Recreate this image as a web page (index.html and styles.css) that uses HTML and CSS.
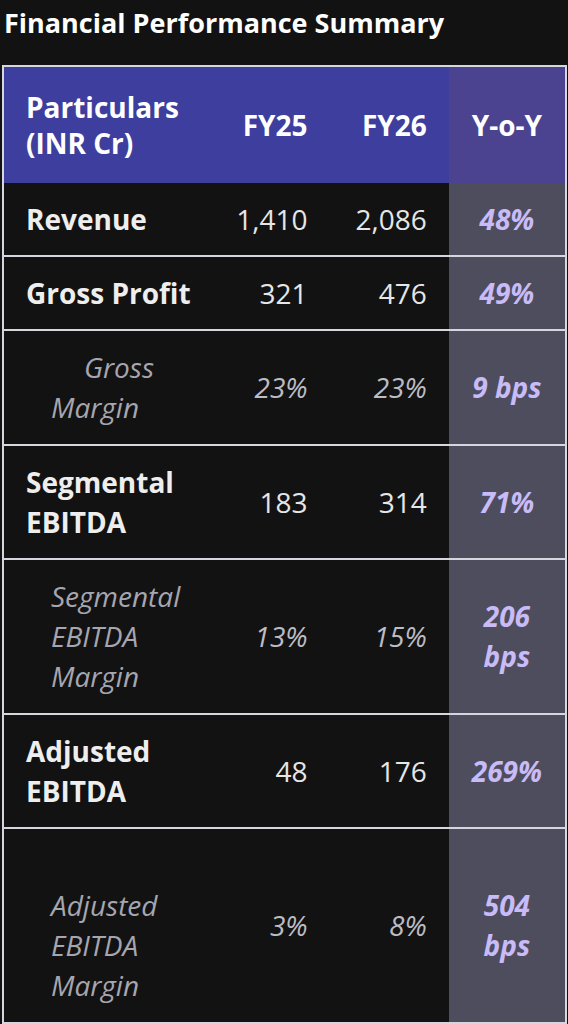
FILE: index.html
```html
<!DOCTYPE html>
<html>
<head>
    <meta charset="utf-8">
    <title>Financial Performance Summary</title>
    <link rel="stylesheet" href="styles.css">
</head>
<body>
    <h1 class="Title">Financial Performance Summary</h1>

    <table class="Summary">
        <colgroup>
            <col class="ColLabel">
            <col class="ColNum">
            <col class="ColNum">
            <col class="ColYoy">
        </colgroup>
        <thead>
            <tr class="Heading">
                <th class="Label">Particulars<br>(INR Cr)</th>
                <th class="Num">FY25</th>
                <th class="Num">FY26</th>
                <th class="Yoy">Y-o-Y</th>
            </tr>
        </thead>
        <tbody>
            <tr>
                <td class="Label">Revenue</td>
                <td class="Num">1,410</td>
                <td class="Num">2,086</td>
                <td class="Yoy">48%</td>
            </tr>
            <tr>
                <td class="Label">Gross Profit</td>
                <td class="Num">321</td>
                <td class="Num">476</td>
                <td class="Yoy">49%</td>
            </tr>
            <tr class="Sub">
                <td class="Label Indent">Gross<br>Margin</td>
                <td class="Num">23%</td>
                <td class="Num">23%</td>
                <td class="Yoy">9 bps</td>
            </tr>
            <tr>
                <td class="Label">Segmental<br>EBITDA</td>
                <td class="Num">183</td>
                <td class="Num">314</td>
                <td class="Yoy">71%</td>
            </tr>
            <tr class="Sub">
                <td class="Label">Segmental<br>EBITDA<br>Margin</td>
                <td class="Num">13%</td>
                <td class="Num">15%</td>
                <td class="Yoy">206<br>bps</td>
            </tr>
            <tr>
                <td class="Label">Adjusted<br>EBITDA</td>
                <td class="Num">48</td>
                <td class="Num">176</td>
                <td class="Yoy">269%</td>
            </tr>
            <tr class="Sub">
                <td class="Label"><br>Adjusted<br>EBITDA<br>Margin</td>
                <td class="Num">3%</td>
                <td class="Num">8%</td>
                <td class="Yoy">504<br>bps</td>
            </tr>
        </tbody>
    </table>
</body>
</html>
```

FILE: styles.css
```css
body {
    margin: 0;
    background-color: #121212;
    font-family: "Open Sans", "Noto Sans", sans-serif;
    color: #ececec;
}

.Title {
    margin: 3px 0 22px 4px;
    font-size: 27px;
    line-height: 40px;
    font-weight: bold;
    color: #ffffff;
}

.Summary {
    margin-left: 2px;
    width: 565px;
    table-layout: fixed;
    border-collapse: collapse;
    border: 2px solid #d6d6de;
    font-size: 28px;
    line-height: 40px;
}

.ColLabel {
    width: 207px;
}

.ColNum {
    width: 119px;
}

.ColYoy {
    width: 117px;
}

.Summary td,
.Summary th {
    padding: 16px 22px;
    vertical-align: middle;
    white-space: nowrap;
}

.Summary tbody tr {
    border-bottom: 2px solid #d6d6de;
}

.Heading th {
    height: 72px;
    padding-top: 22px;
    padding-bottom: 22px;
    line-height: 36px;
    font-weight: bold;
    color: #ffffff;
    background-color: #3e3e9e;
}

.Heading th.Yoy {
    text-align: center;
    background-color: #4b4390;
}

.Label {
    text-align: left;
    font-weight: bold;
    color: #eeeeee;
}

.Num {
    text-align: right;
    color: #e6e6e6;
}

.Summary td.Yoy {
    padding-left: 6px;
    padding-right: 6px;
    text-align: center;
    font-weight: bold;
    font-style: italic;
    color: #c8bbf7;
    background-color: #4e4d5d;
}

.Summary .Sub td {
    padding-bottom: 17px;
}

.Sub .Label {
    padding-left: 47px;
    font-weight: normal;
    font-style: italic;
    color: #a6a6b0;
}

.Sub .Num {
    font-style: italic;
    color: #bcbcc4;
}

.Indent {
    text-indent: 33px;
}
```
